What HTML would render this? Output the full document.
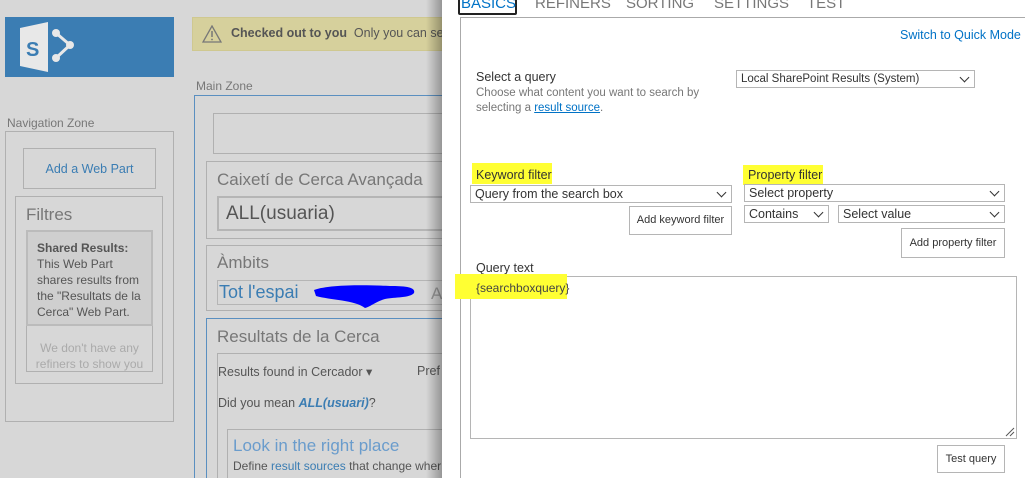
<!DOCTYPE html>
<html><head><meta charset="utf-8"><style>
*{box-sizing:border-box;margin:0;padding:0}
html,body{width:1025px;height:478px;overflow:hidden}
body{position:relative;background:#d7d7d7;font-family:"Segoe UI","Liberation Sans",sans-serif;color:#555}
.a{position:absolute;white-space:nowrap}
.bx{position:absolute;border:1px solid #b0b0b0}
.sel{position:absolute;border:1px solid #b5b5b5;background:#fff;font-size:12.5px;color:#333;padding:1px 4px;line-height:14px}
.sel:after{content:"";position:absolute;right:6px;top:3px;width:6px;height:6px;border-right:1.5px solid #333;border-bottom:1.5px solid #333;transform:rotate(45deg)}
.btn{position:absolute;border:1px solid #b5b5b5;background:#fff;font-size:11px;color:#333;text-align:center}
.hl{background:#ffff33}
.tab{position:absolute;top:-5px;font-size:15px;color:#777;font-family:'Liberation Sans',sans-serif}
</style></head><body>
<div class="a" style="left:5px;top:17px;width:169px;height:60px;background:#3b7db3"></div>
<svg class="a" style="left:18px;top:20px" width="56" height="54" viewBox="0 0 56 54">
<polygon points="2,8 30,2 30,52 2,46" fill="#e8e8e8"/>
<text x="8" y="36" font-family="Liberation Sans" font-weight="bold" font-size="20" fill="#3b7db3">S</text>
<circle cx="38" cy="13" r="4" fill="#e8e8e8"/><circle cx="52" cy="25" r="4" fill="#e8e8e8"/><circle cx="38" cy="38" r="4" fill="#e8e8e8"/>
<polyline points="38,13 52,25 38,38" stroke="#e8e8e8" stroke-width="3" fill="none"/>
</svg>
<div class="a" style="left:192px;top:17px;width:260px;height:34px;background:#d6d09c;border:1px solid #cfc890"></div>
<svg class="a" style="left:202px;top:25px" width="20" height="18"><polygon points="10,1 19,17 1,17" fill="none" stroke="#777" stroke-width="1.3"/><line x1="10" y1="6" x2="10" y2="12" stroke="#777" stroke-width="1.5"/><circle cx="10" cy="14.5" r="0.9" fill="#777"/></svg>
<div class="a" style="left:231px;top:26px;font-size:12.5px;color:#555"><b>Checked out to you</b>&nbsp; Only you can see</div>
<div class="a" style="left:196px;top:79px;font-size:12px;color:#777">Main Zone</div>
<div class="a" style="left:7px;top:116px;font-size:12px;color:#777">Navigation Zone</div>
<div class="bx" style="left:5px;top:131px;width:169px;height:291px"></div>
<div class="bx" style="left:23px;top:148px;width:133px;height:41px;color:#3b7db3;font-size:12.5px;text-align:center;line-height:40px">Add a Web Part</div>
<div class="bx" style="left:15px;top:196px;width:148px;height:188px"></div>
<div class="a" style="left:26px;top:205px;font-size:17px;color:#777">Filtres</div>
<div class="bx" style="left:26px;top:230px;width:127px;height:96px;background:#cfcfcf;border:2px solid #bbb;font-size:12px;line-height:16px;padding:8px 9px;color:#555;white-space:nowrap;overflow:hidden"><b>Shared Results:</b><br>This Web Part<br>shares results from<br>the "Resultats de la<br>Cerca" Web Part.</div>
<div class="bx" style="left:26px;top:326px;width:127px;height:46px;border-top:none;font-size:12px;color:#aaa;text-align:center;line-height:16px;padding-top:14px;white-space:nowrap;overflow:hidden">We don't have any<br>refiners to show you</div>
<div class="a" style="left:194px;top:95px;width:250px;height:390px;border:1px solid #5a8fc0"></div>
<div class="bx" style="left:213px;top:113px;width:240px;height:41px"></div>
<div class="bx" style="left:206px;top:161px;width:240px;height:78px"></div>
<div class="a" style="left:217px;top:170px;font-size:17px;color:#777">Caixetí de Cerca Avançada</div>
<div class="a" style="left:217px;top:196px;width:230px;height:35px;border:2px solid #b5b5b5;font-size:19px;color:#555;padding-left:7px;line-height:31px">ALL(usuaria)</div>
<div class="bx" style="left:206px;top:245px;width:240px;height:66px"></div>
<div class="a" style="left:217px;top:253px;font-size:17px;color:#777">Àmbits</div>
<div class="a" style="left:217px;top:280px;width:230px;height:25px;border:1px solid #b5b5b5;font-size:18px;color:#3b7db3;padding-left:1px;line-height:23px">Tot l'espai</div>
<svg class="a" style="left:310px;top:282px" width="106" height="28"><path d="M4,8 C20,2 60,3 80,4 C95,4 106,5 104,11 C100,16 85,15 75,17 C65,20 60,25 55,26 C45,18 20,18 6,14 Z" fill="#0000ff"/></svg>
<div class="a" style="left:431px;top:284px;font-size:17px;color:#999">A</div>
<div class="a" style="left:206px;top:318px;width:240px;height:170px;border:1px solid #5a8fc0"></div>
<div class="a" style="left:217px;top:327px;font-size:17px;color:#777">Resultats de la Cerca</div>
<div class="bx" style="left:217px;top:353px;width:230px;height:130px;border-right:none;border-bottom:none"></div>
<div class="a" style="left:218px;top:364px;font-size:12.5px;color:#555">Results found in Cercador ▾</div>
<div class="a" style="left:417px;top:364px;font-size:12.5px;color:#555">Pref</div>
<div class="a" style="left:218px;top:396px;font-size:12.5px;color:#555">Did you mean <b style="color:#3b7db3;font-style:italic">ALL(usuari)</b>?</div>
<div class="bx" style="left:227px;top:429px;width:220px;height:60px"></div>
<div class="a" style="left:233px;top:436px;font-size:17px;color:#6a9ccc">Look in the right place</div>
<div class="a" style="left:233px;top:459px;font-size:12px;color:#555">Define <span style="color:#3b7db3">result sources</span> that change wher</div>
<div class="a" style="left:426px;top:0;width:16px;height:478px;background:linear-gradient(to right,rgba(0,0,0,0),rgba(0,0,0,0.3))"></div>
<div class="a" style="left:442px;top:0;width:583px;height:478px;background:#fff"></div>
<div class="a" style="left:460px;top:17px;width:565px;height:461px;border-left:1px solid #aaa;border-top:1px solid #aaa"></div>
<div class="a" style="left:458px;top:-10px;width:59px;height:25px;border:2px solid #222;border-radius:2px;background:#fff"></div>
<div class="tab" style="left:461px;color:#0072c6">BASICS</div>
<div class="tab" style="left:535px">REFINERS</div>
<div class="tab" style="left:626px">SORTING</div>
<div class="tab" style="left:714px">SETTINGS</div>
<div class="tab" style="left:807px">TEST</div>
<div class="a" style="left:900px;top:28px;font-size:12.5px;color:#0072c6">Switch to Quick Mode</div>
<div class="a" style="left:476px;top:70px;font-size:12.5px;color:#333">Select a query</div>
<div class="a" style="left:476px;top:86px;font-size:11.5px;color:#777;line-height:15px">Choose what content you want to search by<br>selecting a <span style="color:#0072c6;text-decoration:underline">result source</span>.</div>
<div class="sel" style="left:736px;top:70px;width:239px;height:18px;font-size:11.5px">Local SharePoint Results (System)</div>
<div class="a hl" style="left:472px;top:163px;width:80px;height:21px"></div>
<div class="a" style="left:476px;top:168px;font-size:12.5px;color:#333">Keyword filter</div>
<div class="a hl" style="left:743px;top:165px;width:80px;height:20px"></div>
<div class="a" style="left:748px;top:168px;font-size:12.5px;color:#333">Property filter</div>
<div class="sel" style="left:470px;top:185px;width:262px;height:18px">Query from the search box</div>
<div class="btn" style="left:629px;top:206px;width:103px;height:29px;line-height:27px">Add keyword filter</div>
<div class="sel" style="left:744px;top:184px;width:261px;height:18px">Select property</div>
<div class="sel" style="left:744px;top:205px;width:85px;height:18px">Contains</div>
<div class="sel" style="left:838px;top:205px;width:167px;height:18px">Select value</div>
<div class="btn" style="left:901px;top:228px;width:104px;height:30px;line-height:28px">Add property filter</div>
<div class="a" style="left:476px;top:261px;font-size:12.5px;color:#333">Query text</div>
<div class="a" style="left:470px;top:276px;width:547px;height:163px;border:1px solid #b5b5b5"></div>
<div class="a hl" style="left:455px;top:274px;width:112px;height:25px"></div>
<div class="a" style="left:476px;top:281px;font-size:12px;color:#444">{searchboxquery}</div>
<svg class="a" style="left:1005px;top:427px" width="10" height="10"><line x1="1" y1="9" x2="9" y2="1" stroke="#555"/><line x1="5" y1="9" x2="9" y2="5" stroke="#555"/></svg>
<div class="btn" style="left:937px;top:445px;width:68px;height:28px;line-height:26px">Test query</div>
</body></html>
